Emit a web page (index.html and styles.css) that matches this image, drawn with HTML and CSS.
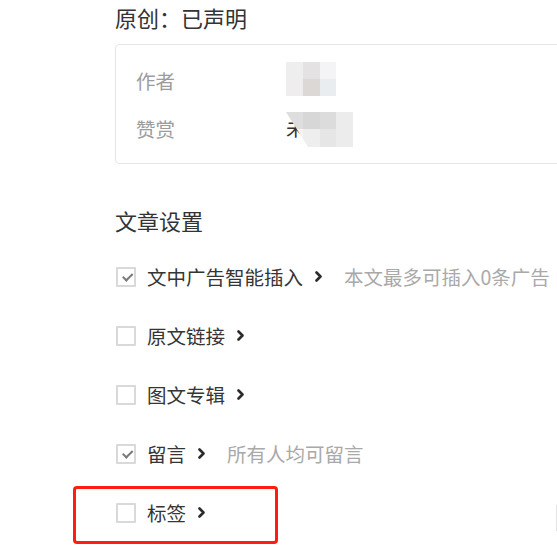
FILE: index.html
```html
<!DOCTYPE html>
<html lang="zh-CN">
<head>
    <meta charset="UTF-8">
    <meta name="viewport" content="width=device-width, initial-scale=1.0">
    <title>文章设置</title>
    <link rel="stylesheet" href="styles.css">
</head>
<body>
    <div class="page">
        <h2 class="section-title">原创：已声明</h2>
        <div class="info-card">
            <div class="info-row">
                <span class="info-label">作者</span>
                <span class="info-value">
                    <svg class="mosaic" width="50" height="34" viewBox="0 0 50 34">
                        <rect x="0" y="0" width="17" height="17" fill="#eeeeee"/>
                        <rect x="17" y="0" width="17" height="17" fill="#e4e3e3"/>
                        <rect x="34" y="0" width="16" height="17" fill="#f4f4f5"/>
                        <rect x="0" y="17" width="17" height="17" fill="#eeeeee"/>
                        <rect x="17" y="17" width="17" height="17" fill="#dbd8d6"/>
                        <rect x="34" y="17" width="16" height="17" fill="#eaedf0"/>
                    </svg>
                </span>
            </div>
            <div class="info-row">
                <span class="info-label">赞赏</span>
                <span class="info-value">
                    <span class="hidden-text">未</span>
                    <svg class="mosaic mosaic-over" width="67" height="35" viewBox="0 0 67 35">
                        <defs>
                            <clipPath id="cut">
                                <polygon points="0,0 67,0 67,35 22,35"/>
                            </clipPath>
                        </defs>
                        <g clip-path="url(#cut)">
                            <rect x="0" y="0" width="17" height="17" fill="#dedede"/>
                            <rect x="17" y="0" width="17" height="17" fill="#d8d7d7"/>
                            <rect x="34" y="0" width="16" height="17" fill="#dcdcdc"/>
                            <rect x="50" y="0" width="17" height="17" fill="#ececec"/>
                            <rect x="0" y="17" width="17" height="18" fill="#f4f4f4"/>
                            <rect x="17" y="17" width="17" height="18" fill="#eeeeee"/>
                            <rect x="34" y="17" width="16" height="18" fill="#e6e6e6"/>
                            <rect x="50" y="17" width="17" height="18" fill="#ececec"/>
                        </g>
                    </svg>
                </span>
            </div>
        </div>

        <h2 class="section-title settings-title">文章设置</h2>
        <ul class="settings">
            <li class="setting">
                <span class="checkbox checked"></span>
                <span class="setting-name">文中广告智能插入</span>
                <svg class="chevron" width="7" height="11" viewBox="0 0 7 11"><polyline points="1.5,1.5 5.5,5.5 1.5,9.5"/></svg>
                <span class="setting-hint">本文最多可插入0条广告</span>
            </li>
            <li class="setting">
                <span class="checkbox"></span>
                <span class="setting-name">原文链接</span>
                <svg class="chevron" width="7" height="11" viewBox="0 0 7 11"><polyline points="1.5,1.5 5.5,5.5 1.5,9.5"/></svg>
            </li>
            <li class="setting">
                <span class="checkbox"></span>
                <span class="setting-name">图文专辑</span>
                <svg class="chevron" width="7" height="11" viewBox="0 0 7 11"><polyline points="1.5,1.5 5.5,5.5 1.5,9.5"/></svg>
            </li>
            <li class="setting">
                <span class="checkbox checked"></span>
                <span class="setting-name">留言</span>
                <svg class="chevron" width="7" height="11" viewBox="0 0 7 11"><polyline points="1.5,1.5 5.5,5.5 1.5,9.5"/></svg>
                <span class="setting-hint">所有人均可留言</span>
            </li>
            <li class="setting highlighted">
                <span class="checkbox"></span>
                <span class="setting-name">标签</span>
                <svg class="chevron" width="7" height="11" viewBox="0 0 7 11"><polyline points="1.5,1.5 5.5,5.5 1.5,9.5"/></svg>
            </li>
        </ul>
        <span class="edge-mark"></span>
    </div>
</body>
</html>
```

FILE: styles.css
```css
html, body {
    margin: 0;
    padding: 0;
    background: #fff;
}
body {
    font-family: "Noto Sans CJK SC", "Noto Sans", sans-serif;
    color: #353535;
    overflow: hidden;
}
.page {
    position: relative;
    width: 557px;
    height: 546px;
    padding-left: 115px;
    box-sizing: border-box;
    overflow: hidden;
}
.section-title {
    margin: 2px 0 0;
    font-size: 22px;
    font-weight: normal;
    line-height: 30px;
    color: #333;
}
.info-card {
    width: 600px;
    height: 120px;
    margin-top: 12px;
    padding: 11px 20px 0;
    box-sizing: border-box;
    border: 1px solid #e6e6e6;
    border-radius: 4px;
}
.info-row {
    display: flex;
    align-items: center;
    height: 48px;
}
.info-label {
    width: 150px;
    font-size: 19.5px;
    color: #9c9c9c;
}
.info-value {
    position: relative;
    display: flex;
    align-items: center;
    height: 48px;
}
.mosaic {
    display: block;
    margin-top: -3px;
}
.hidden-text {
    font-size: 19.5px;
    color: #333;
    line-height: 48px;
}
.mosaic-over {
    position: absolute;
    left: 0;
    top: 8px;
    margin: 0;
}
.settings-title {
    margin-top: 41px;
}
.settings {
    list-style: none;
    margin: 12px 0 0;
    padding: 0;
}
.setting {
    position: relative;
    display: flex;
    align-items: center;
    height: 59px;
    font-size: 19.5px;
}
.checkbox {
    position: relative;
    width: 20px;
    height: 20px;
    margin-left: 1px;
    box-sizing: border-box;
    border: 2px solid #d9d9d9;
    border-radius: 1px;
}
.checkbox.checked::after {
    content: "";
    position: absolute;
    left: 4px;
    top: 2px;
    width: 8px;
    height: 4px;
    border-left: 2.5px solid #7a7a7a;
    border-bottom: 2.5px solid #7a7a7a;
    transform: rotate(-45deg) translate(-1px, 2px);
}
.setting-name {
    margin-left: 11px;
    color: #353535;
}
.chevron {
    margin-left: 12px;
    fill: none;
    stroke: #2b2b2b;
    stroke-width: 2.6;
    stroke-linecap: round;
    stroke-linejoin: round;
}
.setting-hint {
    margin-left: 22px;
    color: #a9a9a9;
}
.highlighted::after {
    content: "";
    position: absolute;
    left: -42px;
    top: 3px;
    width: 205px;
    height: 58px;
    box-sizing: border-box;
    border: 3px solid #ff1d12;
    border-radius: 4px;
}
.edge-mark {
    position: absolute;
    right: 0;
    top: 505px;
    width: 1px;
    height: 26px;
    background: #e4e4e4;
}
```
